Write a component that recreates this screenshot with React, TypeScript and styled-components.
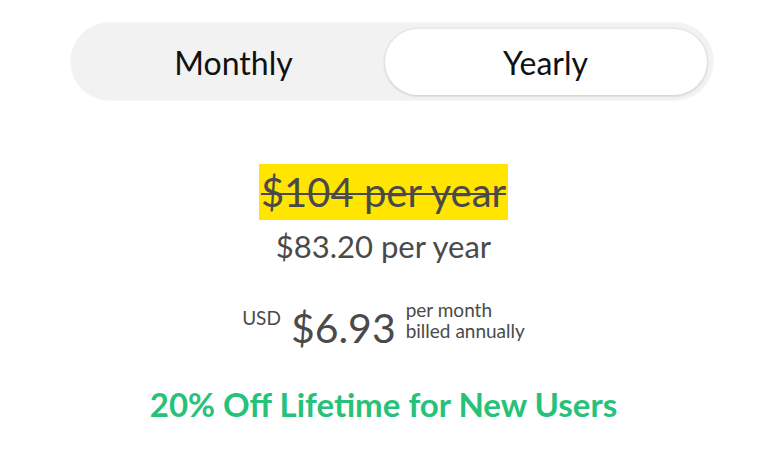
import React, { useState } from 'react';
import styled, { createGlobalStyle } from 'styled-components';

const GlobalStyle = createGlobalStyle`
  html, body {
    margin: 0;
    padding: 0;
    background: #ffffff;
  }
  body {
    font-family: Lato, "Liberation Sans", sans-serif;
    color: #4a4a4a;
  }
`;

type Plan = 'monthly' | 'yearly';

const App = () => {
  const [plan, setPlan] = useState<Plan>('yearly');

  return (
    <Page>
      <GlobalStyle />
      <Toggle>
        <ToggleButton $active={plan === 'monthly'} onClick={() => setPlan('monthly')}>
          Monthly
        </ToggleButton>
        <ToggleButton $active={plan === 'yearly'} onClick={() => setPlan('yearly')}>
          Yearly
        </ToggleButton>
      </Toggle>

      <PriceBlock>
        <OldPrice>$104 per year</OldPrice>
        <NewPrice>$83.20 per year</NewPrice>
        <MonthlyRow>
          <Currency>USD</Currency>
          <BigPrice>$6.93</BigPrice>
          <Billing>
            <span>per month</span>
            <span>billed annually</span>
          </Billing>
        </MonthlyRow>
        <Offer>20% Off Lifetime for New Users</Offer>
      </PriceBlock>
    </Page>
  );
};

const Page = styled.main`
  width: 783px;
  min-height: 454px;
  display: flex;
  flex-direction: column;
  align-items: center;
  padding-top: 23px;
  box-sizing: border-box;
`;

const Toggle = styled.div`
  width: 642px;
  height: 77px;
  box-sizing: border-box;
  padding: 6px 6px 5px 12px;
  border-radius: 39px;
  background: #f2f2f2;
  box-shadow: 0 0 0 1px #f6f6f6;
  display: grid;
  grid-template-columns: 1fr 322px;
`;

const ToggleButton = styled.button<{ $active: boolean }>`
  border: none;
  padding: 0;
  border-radius: 34px;
  font-family: inherit;
  font-size: 32px;
  color: #111111;
  cursor: pointer;
  background: ${(p) => (p.$active ? '#ffffff' : 'transparent')};
  box-shadow: ${(p) => (p.$active ? '0 1px 3px rgba(0, 0, 0, 0.12), 0 0 0 2px #ebebeb' : 'none')};
`;

const PriceBlock = styled.section`
  display: flex;
  flex-direction: column;
  align-items: center;
  margin-top: 64px;
  margin-right: 16px;
`;

const OldPrice = styled.div`
  background: #ffe500;
  font-size: 40px;
  line-height: 56px;
  padding: 0 2px;
  text-decoration: line-through;
  text-decoration-thickness: 2px;
`;

const NewPrice = styled.div`
  font-size: 31px;
  line-height: 40px;
  margin-top: 6px;
`;

const MonthlyRow = styled.div`
  display: flex;
  align-items: flex-start;
  margin-top: 36px;
`;

const Currency = styled.span`
  font-size: 19px;
  line-height: 23px;
  margin-top: 4px;
  margin-right: 10px;
`;

const BigPrice = styled.span`
  font-size: 41px;
  line-height: 50px;
  margin-top: 1px;
  margin-right: 10px;
`;

const Billing = styled.div`
  display: flex;
  flex-direction: column;
  font-size: 19px;
  line-height: 21px;
  margin-top: -3px;
`;

const Offer = styled.div`
  margin-top: 31px;
  font-size: 33px;
  font-weight: 700;
  color: #27c27a;
`;

export default App;
